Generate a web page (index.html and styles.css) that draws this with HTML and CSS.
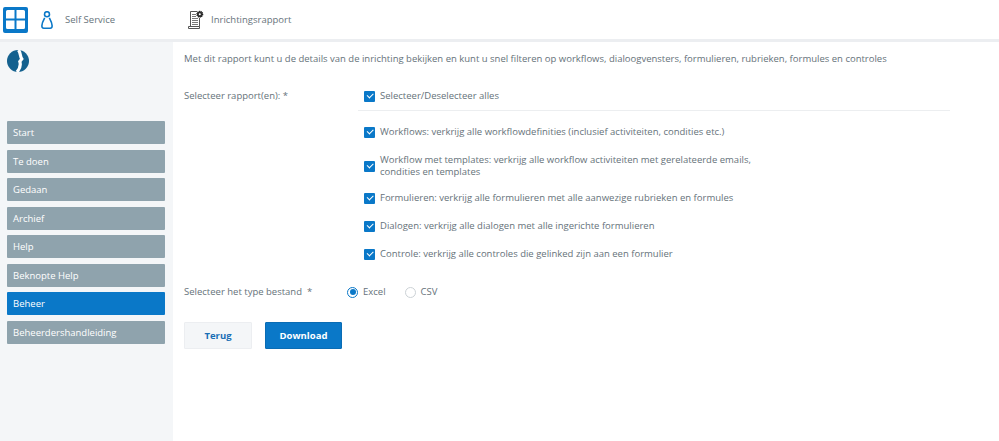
FILE: index.html
```html
<!DOCTYPE html>
<html lang="nl">
<head>
<meta charset="utf-8">
<title>Inrichtingsrapport</title>
<link rel="stylesheet" href="styles.css">
</head>
<body>
<header class="topbar">
  <a class="apps"><svg width="19" height="19" viewBox="0 0 19 19"><path d="M0 1.500A1.500 1.500 0 0 1 1.500 0H8.500V8.500H0zM10.500 0H17.500A1.500 1.500 0 0 1 19 1.500V8.500H10.500zM0 10.500H8.500V19H1.500A1.500 1.500 0 0 1 0 17.500zM10.500 10.500H19V17.500A1.500 1.500 0 0 1 17.500 19H10.500z" fill="#fff"/></svg></a>
  <svg class="user" width="12" height="18" viewBox="0 0 12 18" fill="none" stroke="#0a78c8" stroke-width="1.600"><circle cx="6" cy="3.200" r="2.500"/><path d="M3.700 6.800C2.500 9 1 11.500 .9 14.500 .8 16.200 1.400 17.200 2.800 17.200H9.200C10.600 17.200 11.200 16.200 11.100 14.500 11 11.500 9.500 9 8.300 6.800"/></svg>
  <span class="service">Self Service</span>
  <svg class="doc" width="16" height="19" viewBox="0 0 16 19" fill="none" stroke="#555" stroke-width="1"><path d="M2.500 1.500H9M2.500 1.500V16.500M11.500 8V16.500"/><path d="M.5 16.500H11.500V18.500H.5z"/><path d="M4 4.500H8M4 6.500H8M4 8.500H10M4 10.500H10M4 12.500H10M4 14.500H10" stroke-width=".8"/><circle cx="11.800" cy="4.200" r="2.800" fill="#333" stroke="#222" stroke-dasharray="1.100 .6" stroke-width="1.400"/><circle cx="11.800" cy="4.200" r="1" fill="#fff" stroke="none"/></svg>
  <span class="title">Inrichtingsrapport</span>
</header>
<div class="shell">
  <aside class="sidebar">
    <svg class="logo" width="22" height="22" viewBox="0 0 22 22"><circle cx="11" cy="11" r="11" fill="#14618f"/><path d="M11.500 0C14 3.500 12.800 6 14.800 9L12.800 11.500C13.800 14.500 13 18.500 10 22" fill="none" stroke="#fff" stroke-width="3.200"/></svg>
    <nav class="menu">
      <a class="item">Start</a>
      <a class="item">Te doen</a>
      <a class="item">Gedaan</a>
      <a class="item">Archief</a>
      <a class="item">Help</a>
      <a class="item">Beknopte Help</a>
      <a class="item active">Beheer</a>
      <a class="item">Beheerdershandleiding</a>
    </nav>
  </aside>
  <main class="content">
    <p class="intro">Met dit rapport kunt u de details van de inrichting bekijken en kunt u snel filteren op workflows, dialoogvensters, formulieren, rubrieken, formules en controles</p>
    <section class="form-row">
      <div class="label">Selecteer rapport(en): *</div>
      <div class="options">
        <div class="check all"><span class="box"></span><span>Selecteer/Deselecteer alles</span></div>
        <div class="divider"></div>
        <div class="check"><span class="box"></span><span>Workflows: verkrijg alle workflowdefinities (inclusief activiteiten, condities etc.)</span></div>
        <div class="check tight"><span class="box"></span><span>Workflow met templates: verkrijg alle workflow activiteiten met gerelateerde emails,<br>condities en templates</span></div>
        <div class="check"><span class="box"></span><span>Formulieren: verkrijg alle formulieren met alle aanwezige rubrieken en formules</span></div>
        <div class="check"><span class="box"></span><span>Dialogen: verkrijg alle dialogen met alle ingerichte formulieren</span></div>
        <div class="check"><span class="box"></span><span>Controle: verkrijg alle controles die gelinked zijn aan een formulier</span></div>
      </div>
    </section>
    <section class="type-row">
      <div class="type-label">Selecteer het type bestand&nbsp; *</div>
      <div class="radio"><span class="dot on"></span>Excel</div>
      <div class="radio"><span class="dot"></span>CSV</div>
    </section>
    <div class="actions">
      <button class="btn back">Terug</button>
      <button class="btn primary">Download</button>
    </div>
  </main>
</div>
</body>
</html>
```
FILE: styles.css
```css
* { box-sizing: border-box; }
html, body { margin: 0; height: 100%; overflow: hidden; }
body { font-family: "Open Sans", sans-serif; font-size: 9.5px; color: #66727a; background: #fff; }
.topbar { height: 42px; display: flex; align-items: center; background: #fff; border-bottom: 3px solid #eceef1; padding-left: 3px; }
.apps { width: 25px; height: 26px; background: #0a78c8; border-radius: 2px; display: flex; align-items: center; justify-content: center; }
.user { margin-left: 13px; }
.service { margin-left: 12px; color: #68747c; }
.doc { margin-left: 73px; }
.title { margin-left: 7px; color: #68747c; }
.shell { display: flex; height: 399px; }
.sidebar { width: 173px; background: #f4f6f8; padding: 8px 8px 0 7px; }
.logo { display: block; }
.menu { display: flex; flex-direction: column; gap: 5.500px; margin-top: 49px; }
.item { height: 23px; line-height: 23px; padding-left: 6px; background: #8fa3ad; color: #fff; border-radius: 1px; }
.item.active { background: #0a78c8; }
.content { flex: 1; padding: 10px 0 0 11px; }
.intro { margin: 0; line-height: 14px; }
.form-row { display: flex; margin-top: 22px; }
.label { width: 180px; line-height: 14px; padding-top: 1px; }
.options { width: 586px; }
.check { display: flex; align-items: center; gap: 5px; line-height: 12px; margin-bottom: 16px; }
.check.tight { margin-bottom: 14px; }
.check.all { margin-bottom: 7px; padding-top: 1px; line-height: 14px; }
.divider { height: 1px; background: #eceef0; margin: 0 0 15px -6px; }
.box { flex: none; width: 11px; height: 11px; background: #0a78c8; border-radius: 1px; position: relative; }
.box::after { content: ""; position: absolute; left: 3px; top: 2.500px; width: 5px; height: 2.500px; border-left: 1.200px solid #fff; border-bottom: 1.200px solid #fff; transform: rotate(-45deg); }
.type-row { display: flex; align-items: center; margin-top: 9px; line-height: 14px; }
.type-label { width: 163px; }
.radio { display: flex; align-items: center; gap: 5px; margin-right: 19px; }
.dot { width: 11px; height: 11px; border: 1px solid #ccd2d6; border-radius: 50%; position: relative; }
.dot.on { border-color: #0a78c8; }
.dot.on::after { content: ""; position: absolute; left: 1.500px; top: 1.500px; width: 6px; height: 6px; border-radius: 50%; background: #0a78c8; }
.actions { display: flex; gap: 13px; margin-top: 23px; }
.btn { height: 27px; font: 700 9.500px "Open Sans", sans-serif; border-radius: 1px; cursor: pointer; }
.back { width: 68px; background: #f4f6f8; border: 1px solid #eceef1; color: #1a6fb5; }
.primary { width: 77px; background: #0a78c8; border: 1px solid #0a6cb4; color: #fff; }
```
